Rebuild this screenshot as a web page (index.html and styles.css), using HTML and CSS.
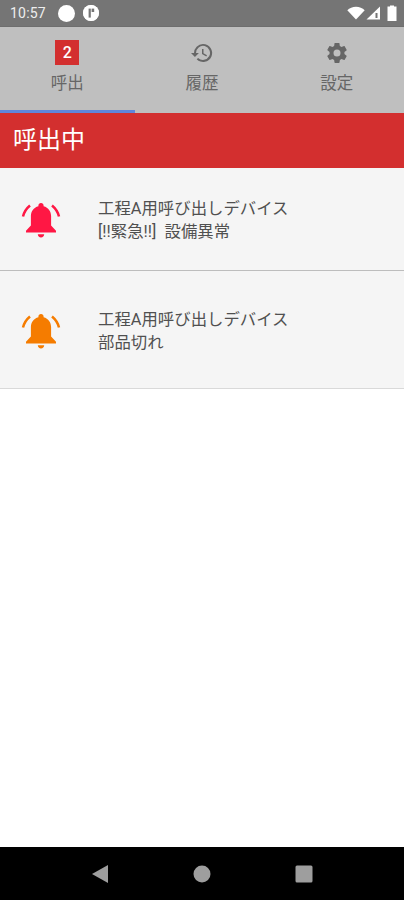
FILE: index.html
```html
<!DOCTYPE html>
<html lang="ja">
<head>
<meta charset="utf-8">
<title>呼出</title>
<link rel="stylesheet" href="styles.css">
</head>
<body>
<div class="app">
  <header class="status">
    <div class="status-left">
      <span class="time">10:57</span>
      <span class="dot"></span>
      <span class="dot dot-f">
        <svg viewBox="0 0 16 16" width="16" height="16"><circle cx="8" cy="8" r="8" fill="#fff"/><path d="M5.600 3.600h2.200v9H5.600z" fill="#757575"/><path d="M8.600 3.600h2.600v3.400H8.600z" fill="#757575"/></svg>
      </span>
    </div>
    <div class="status-right">
      <svg class="wifi" viewBox="0 0 18 14" width="18" height="14"><path d="M0.300 4.200C2.500 2 5.600 0.700 9 0.700s6.500 1.300 8.700 3.500L9 13.600z" fill="#fff"/></svg>
      <svg class="signal" viewBox="0 0 15 14" width="15" height="14"><path d="M0.500 13.500L14 0.500v13z" fill="#fff"/><path d="M9.500 7h2v5h-2z" fill="#757575"/></svg>
      <svg viewBox="0 0 10 16" width="10" height="16"><path d="M3 1.500V0.500h4v1h2.500V16H0.500V1.500z" fill="#fff"/></svg>
    </div>
  </header>

  <nav class="tabs">
    <div class="tab tab-active">
      <span class="badge">2</span>
      <span class="tab-label">呼出</span>
    </div>
    <div class="tab">
      <svg class="tab-icon" viewBox="0 0 24 24" width="24" height="24"><path d="M13 3a9 9 0 0 0-9 9H1l3.900 3.900L8.900 12H6a7 7 0 1 1 2.100 4.900l-1.400 1.400A9 9 0 1 0 13 3zm-1 5v5l4.300 2.500.700-1.200-3.500-2.100V8z" fill="#666"/></svg>
      <span class="tab-label">履歴</span>
    </div>
    <div class="tab">
      <svg class="tab-icon" viewBox="0 0 24 24" width="24" height="24"><path d="M19.400 13c.040-.300.100-.700.100-1s-.060-.700-.100-1l2.100-1.600c.200-.150.250-.420.120-.640l-2-3.460c-.120-.220-.390-.300-.610-.220l-2.490 1c-.520-.400-1.060-.730-1.690-.980l-.380-2.650C14.460 2.180 14.250 2 14 2h-4c-.250 0-.460.180-.490.420l-.380 2.650c-.630.250-1.170.590-1.690.980l-2.490-1c-.230-.090-.490 0-.610.220l-2 3.460c-.130.220-.070.490.120.640L4.570 11c-.040.300-.070.700-.070 1s.030.700.070 1l-2.110 1.630c-.190.150-.240.420-.120.640l2 3.460c.120.220.390.300.610.220l2.490-1c.520.400 1.060.730 1.690.980l.380 2.650c.030.240.240.420.490.420h4c.250 0 .460-.180.490-.420l.380-2.650c.630-.250 1.170-.590 1.690-.980l2.490 1c.230.090.490 0 .610-.220l2-3.460c.120-.220.070-.490-.120-.640zM12 15.500a3.500 3.500 0 1 1 0-7 3.500 3.500 0 0 1 0 7z" fill="#666"/></svg>
      <span class="tab-label">設定</span>
    </div>
  </nav>

  <div class="title-bar">呼出中</div>

  <main class="list">
    <article class="row row-first">
      <svg class="bell bell-red" viewBox="0 0 40 38" width="40" height="38"><path d="M20 2c1.500 0 2.600 1.100 2.600 2.600v.6c4.800 1.300 7.500 5.200 7.500 10v9.200l4.900 5.400v1.700H5v-1.700l4.900-5.400v-9.200c0-4.800 2.700-8.700 7.500-10v-.6C17.400 3.100 18.500 2 20 2zM16.800 33.200h6.400c0 1.800-1.400 3.200-3.200 3.200s-3.200-1.400-3.200-3.200z"/><path class="wave" d="M9 4.500C5.700 7.200 3.200 10.500 2 15.500M31 4.500c3.300 2.700 5.800 6 7 11"/></svg>
      <div class="row-text">
        <p>工程A用呼び出しデバイス</p>
        <p>[!!緊急!!]&nbsp; 設備異常</p>
      </div>
    </article>
    <article class="row row-second">
      <svg class="bell bell-orange" viewBox="0 0 40 38" width="40" height="38"><path d="M20 2c1.500 0 2.600 1.100 2.600 2.600v.6c4.800 1.300 7.500 5.200 7.500 10v9.200l4.900 5.400v1.700H5v-1.700l4.900-5.400v-9.200c0-4.800 2.700-8.700 7.500-10v-.6C17.400 3.100 18.500 2 20 2zM16.800 33.200h6.400c0 1.800-1.400 3.200-3.200 3.200s-3.200-1.400-3.200-3.200z"/><path class="wave" d="M9 4.500C5.700 7.200 3.200 10.500 2 15.500M31 4.500c3.300 2.700 5.800 6 7 11"/></svg>
      <div class="row-text">
        <p>工程A用呼び出しデバイス</p>
        <p>部品切れ</p>
      </div>
    </article>
  </main>

  <footer class="navbar">
    <svg viewBox="0 0 18 20" width="18" height="20"><path d="M17 1v18L1 10z" fill="#9e9e9e"/></svg>
    <svg viewBox="0 0 18 18" width="18" height="18"><circle cx="9" cy="9" r="8.500" fill="#9e9e9e"/></svg>
    <svg viewBox="0 0 18 18" width="18" height="18"><rect x="0.500" y="0.500" width="17" height="17" rx="1.500" fill="#9e9e9e"/></svg>
  </footer>
</div>
</body>
</html>
```

FILE: styles.css
```css
* { box-sizing: border-box; }
html, body { margin: 0; padding: 0; }
body { background: #fff; font-family: "Roboto", "Noto Sans CJK JP", sans-serif; }
p { margin: 0; }

.app {
  width: 404px;
  height: 900px;
  display: flex;
  flex-direction: column;
  overflow: hidden;
}

.status {
  height: 27px;
  flex: none;
  background: #757575;
  border-bottom: 1px solid #6e6e6e;
  display: flex;
  align-items: center;
  justify-content: space-between;
  padding: 2px 7px 2px 10px;
  color: #eee;
}
.status-left { display: flex; align-items: center; }
.time { font-size: 14px; letter-spacing: 0.2px; margin-right: 12px; }
.dot { width: 17px; height: 17px; border-radius: 50%; background: #fff; margin-right: 8px; }
.dot-f { width: 16px; height: 16px; margin-right: 0; display: flex; }
.status-right { display: flex; align-items: center; }
.wifi { margin-right: 1px; }
.signal { margin-right: 6px; }

.tabs {
  height: 86px;
  flex: none;
  background: #bfbfbf;
  display: grid;
  grid-template-columns: repeat(3, 1fr);
}
.tab {
  display: flex;
  flex-direction: column;
  align-items: center;
  padding-top: 14px;
  border-bottom: 3px solid transparent;
}
.tab-active { border-bottom-color: #5f86dc; }
.tab-icon { height: 24px; display: block; }
.badge {
  width: 24px;
  height: 25px;
  margin-top: -1px;
  background: #d32f2f;
  color: #fff;
  font: 500 16px/25px "Roboto", sans-serif;
  text-align: center;
}
.tab-label {
  margin-top: 9px;
  font-size: 16.500px;
  line-height: 20px;
  color: #666;
}

.title-bar {
  height: 55px;
  flex: none;
  background: #d32f2f;
  color: #fff;
  font-size: 24px;
  line-height: 55px;
  padding-left: 13px;
}

.list { flex: 1; background: #fff; }
.row {
  display: flex;
  align-items: center;
  background: #f5f5f5;
  border-bottom: 1px solid #bdbdbd;
  padding-left: 21px;
}
.row-first { height: 103px; padding-top: 2px; }
.row-second { height: 118px; padding-top: 2px; border-bottom-color: #d9d9d9; }
.bell { flex: none; fill: currentColor; }
.bell-red { color: #ff1744; }
.bell-orange { color: #f57c00; }
.wave { fill: none; stroke: currentColor; stroke-width: 2.500; stroke-dasharray: none; }
.row-text {
  margin-left: 37px;
  font-size: 16.400px;
  line-height: 23px;
  color: #505050;
}

.navbar {
  height: 53px;
  flex: none;
  background: #000;
  display: grid;
  grid-template-columns: 18px 18px 18px;
  justify-content: center;
  column-gap: 84px;
  align-items: center;
}
```
